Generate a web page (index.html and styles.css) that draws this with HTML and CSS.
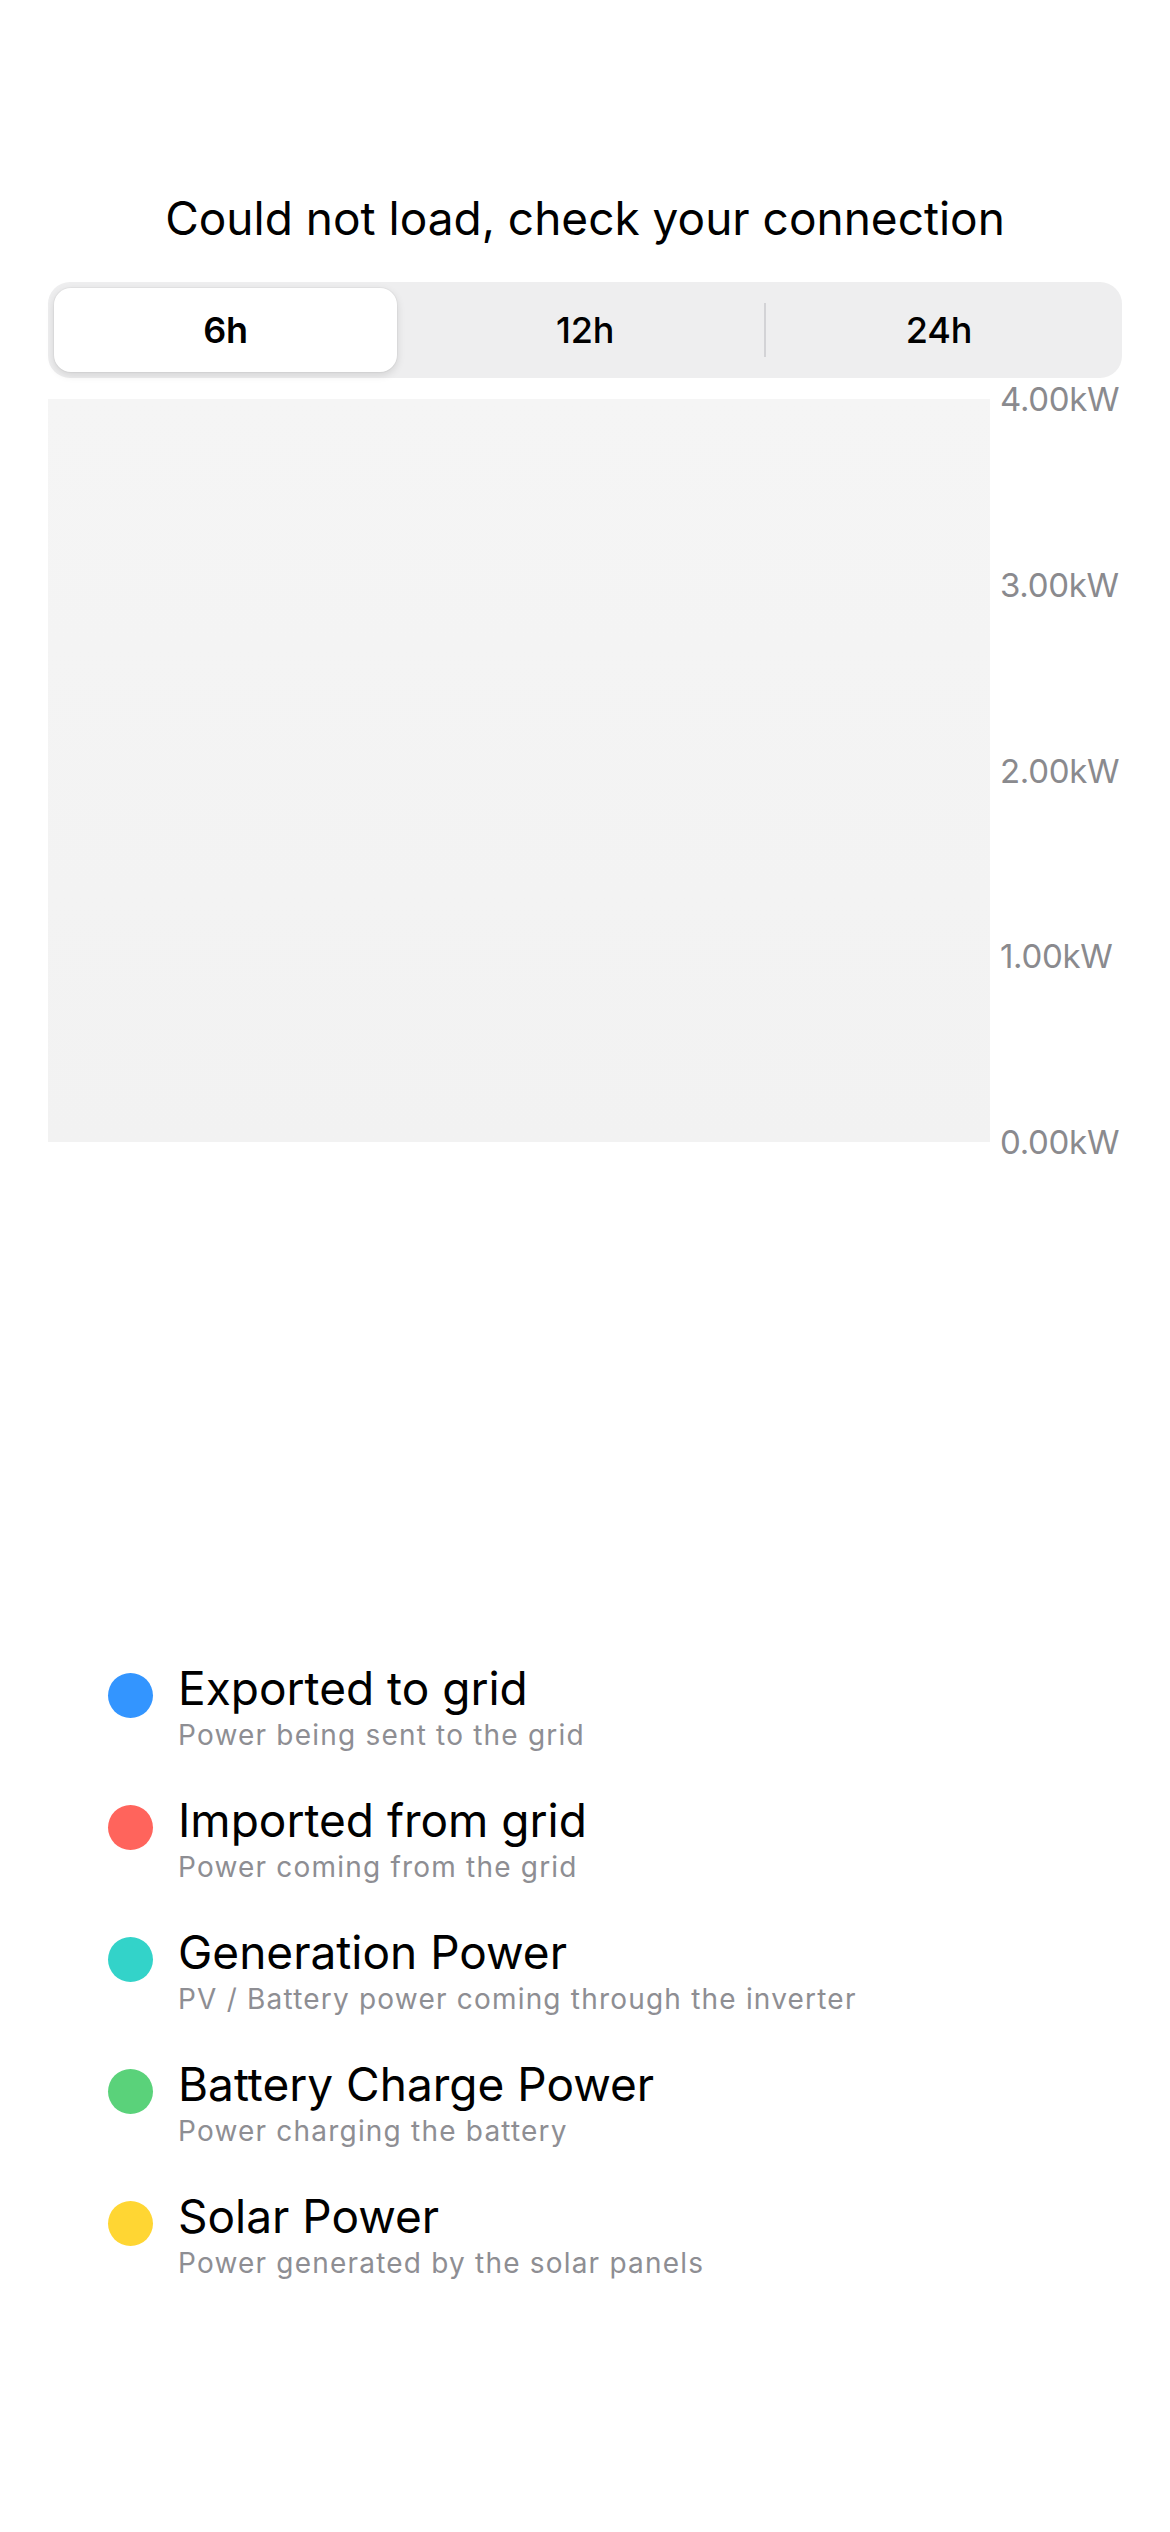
FILE: index.html
```html
<!DOCTYPE html>
<html lang="en">
<head>
<meta charset="utf-8">
<title>Power</title>
<link rel="stylesheet" href="styles.css">
</head>
<body>
<main class="screen">
  <h1 class="status">Could not load, check your connection</h1>

  <div class="segmented">
    <div class="seg seg-active">6h</div>
    <div class="seg">12h</div>
    <div class="seg seg-divided">24h</div>
  </div>

  <section class="chart-row">
    <div class="chart-area"></div>
    <div class="axis">
      <span class="axis-label">4.00kW</span>
      <span class="axis-label">3.00kW</span>
      <span class="axis-label">2.00kW</span>
      <span class="axis-label">1.00kW</span>
      <span class="axis-label">0.00kW</span>
    </div>
  </section>

  <ul class="legend">
    <li class="legend-item">
      <span class="dot dot-blue"></span>
      <div class="legend-text">
        <div class="legend-title">Exported to grid</div>
        <div class="legend-sub">Power being sent to the grid</div>
      </div>
    </li>
    <li class="legend-item">
      <span class="dot dot-red"></span>
      <div class="legend-text">
        <div class="legend-title">Imported from grid</div>
        <div class="legend-sub">Power coming from the grid</div>
      </div>
    </li>
    <li class="legend-item">
      <span class="dot dot-teal"></span>
      <div class="legend-text">
        <div class="legend-title">Generation Power</div>
        <div class="legend-sub">PV / Battery power coming through the inverter</div>
      </div>
    </li>
    <li class="legend-item">
      <span class="dot dot-green"></span>
      <div class="legend-text">
        <div class="legend-title">Battery Charge Power</div>
        <div class="legend-sub">Power charging the battery</div>
      </div>
    </li>
    <li class="legend-item">
      <span class="dot dot-yellow"></span>
      <div class="legend-text">
        <div class="legend-title">Solar Power</div>
        <div class="legend-sub">Power generated by the solar panels</div>
      </div>
    </li>
  </ul>
</main>
</body>
</html>
```

FILE: styles.css
```css
* { box-sizing: border-box; }

html, body {
  margin: 0;
  padding: 0;
  background: #ffffff;
}

body {
  font-family: Inter, "Noto Sans", "Liberation Sans", sans-serif;
  color: #000000;
  width: 1170px;
  min-height: 2532px;
}

.screen {
  padding-top: 190px;
}

.status {
  margin: 0;
  font-size: 46px;
  line-height: 56px;
  font-weight: 400;
  text-align: center;
  letter-spacing: 0;
}

.segmented {
  margin: 36px 48px 0;
  height: 96px;
  padding: 6px;
  background: #eeeeef;
  border-radius: 22px;
  display: grid;
  grid-template-columns: 1fr 1fr 1fr;
}

.seg {
  position: relative;
  display: flex;
  align-items: center;
  justify-content: center;
  font-size: 36px;
  font-weight: 500;
  letter-spacing: -0.2px;
  border-radius: 17px;
}

.seg-active {
  background: #ffffff;
  font-weight: 600;
  margin-right: 11px;
  box-shadow: 0 3px 8px rgba(0, 0, 0, 0.12), 0 0 0 1px rgba(0, 0, 0, 0.03);
}

.seg-divided::before {
  content: "";
  position: absolute;
  left: 2px;
  top: 15px;
  bottom: 15px;
  width: 2px;
  background: #d3d3d6;
}

.chart-row {
  margin: 21px 0 0 48px;
  display: flex;
  align-items: flex-start;
}

.chart-area {
  width: 942px;
  height: 743px;
  background: linear-gradient(#f5f5f5, #f2f2f2);
}

.axis {
  margin: -17px 0 -17px 10px;
  height: 777px;
  display: flex;
  flex-direction: column;
  justify-content: space-between;
}

.axis-label {
  font-size: 33px;
  line-height: 34px;
  font-weight: 400;
  color: #8a8a8e;
  letter-spacing: -0.3px;
}

.legend {
  list-style: none;
  margin: 520px 0 0;
  padding: 0 0 0 108px;
  display: flex;
  flex-direction: column;
  gap: 42px;
}

.legend-item {
  display: flex;
  align-items: flex-start;
  gap: 25px;
}

.dot {
  flex: none;
  width: 45px;
  height: 45px;
  border-radius: 50%;
  margin-top: 11px;
}

.dot-blue { background: #3395ff; }
.dot-red { background: #ff645c; }
.dot-teal { background: #33d3c9; }
.dot-green { background: #5ad27a; }
.dot-yellow { background: #ffd633; }

.legend-text {
  display: flex;
  flex-direction: column;
  gap: 4px;
}

.legend-title {
  font-size: 46px;
  line-height: 52px;
  font-weight: 400;
  letter-spacing: 0;
}

.legend-sub {
  font-size: 28px;
  line-height: 34px;
  color: #8e8e93;
  letter-spacing: 1.2px;
}
```
